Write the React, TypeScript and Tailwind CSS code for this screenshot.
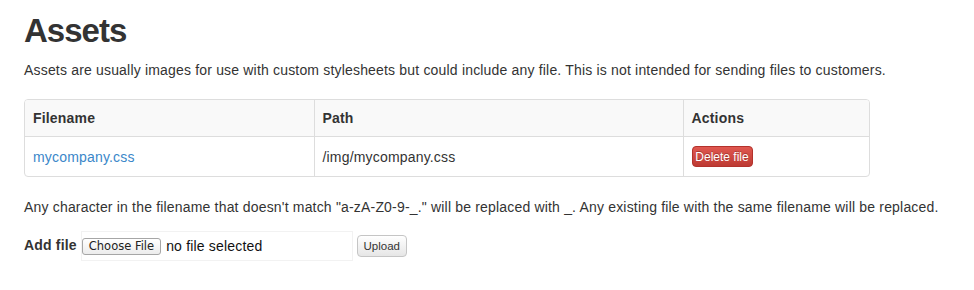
export default function App() {
  return (
    <div className="min-h-[290px] bg-white px-6 text-[14px] leading-5 tracking-[0.18px] text-[#333] [font-family:'Liberation_Sans',Arial,sans-serif]">
      <h1 className="pt-[13px] text-[33px] font-bold leading-[36px] tracking-[-1px] text-[#333]">Assets</h1>
      <p className="mt-[11px]">
        Assets are usually images for use with custom stylesheets but could include any file. This is not intended for sending files to customers.
      </p>

      <div className="mt-[19px] w-[846px] overflow-hidden rounded-[4px] border border-[#ddd]">
        <table className="w-full border-collapse text-left">
          <thead>
            <tr className="bg-[#f9f9f9]">
              <th className="w-[289px] border-b border-[#ddd] px-2 py-2 font-bold">Filename</th>
              <th className="w-[369px] border-b border-l border-[#ddd] px-2 py-2 font-bold">Path</th>
              <th className="border-b border-l border-[#ddd] px-2 py-2 font-bold">Actions</th>
            </tr>
          </thead>
          <tbody>
            <tr>
              <td className="px-2 py-[9px]">
                <a className="text-[#3a87c9]" href="#">mycompany.css</a>
              </td>
              <td className="border-l border-[#ddd] px-2 py-[9px]">/img/mycompany.css</td>
              <td className="border-l border-[#ddd] px-2 py-[9px]">
                <button className="flex h-[21px] w-[61px] items-center justify-center rounded-[4px] border border-[#b3322c] bg-gradient-to-b from-[#e0574f] to-[#bd3a33] text-[12px] tracking-[0px] text-white [text-shadow:0_-1px_0_rgba(0,0,0,0.25)]">
                  Delete file
                </button>
              </td>
            </tr>
          </tbody>
        </table>
      </div>

      <p className="mt-[20px]">
        Any character in the filename that doesn't match <span className="text-[#333]">"a-zA-Z0-9-_."</span> will be replaced with _. Any existing file with the same filename will be replaced.
      </p>

      <div className="mt-[14px] flex items-start">
        <span className="mt-[4px] mr-1 font-bold">Add file</span>
        <div className="flex h-[30px] w-[272px] items-center border border-[#f2f2f2] bg-white pl-0">
          <span className="flex h-[17px] items-center rounded-[3px] border border-[#a6a6a6] bg-gradient-to-b from-white to-[#ececec] px-[6px] text-[11.5px] tracking-[0px] text-[#222] [font-family:'DejaVu_Sans',sans-serif]">
            Choose File
          </span>
          <span className="ml-[5px] text-[14px] text-[#111]">no file selected</span>
        </div>
        <button className="mt-[4px] ml-[4px] flex h-[22px] w-[50px] items-center justify-center rounded-[4px] border border-[#c5c5c5] bg-gradient-to-b from-white to-[#e6e6e6] text-[11.5px] tracking-[0px] text-[#333]">
          Upload
        </button>
      </div>
    </div>
  );
}
